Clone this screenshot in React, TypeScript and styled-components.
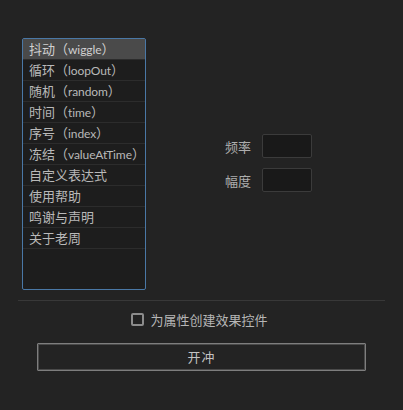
import { useState } from 'react';
import styled, { createGlobalStyle } from 'styled-components';

const GlobalStyle = createGlobalStyle`
  html, body {
    margin: 0;
    padding: 0;
    background: #232323;
  }
  body {
    font-family: "Noto Sans CJK SC", "Noto Sans", sans-serif;
    font-size: 13px;
    color: #b4b4b4;
  }
`;

const Page = styled.div`
  width: 403px;
  height: 410px;
  box-sizing: border-box;
  padding: 38px 18px 0 18px;
`;

const Top = styled.div`
  display: flex;
  height: 252px;
  padding-left: 4px;
`;

const List = styled.ul`
  width: 124px;
  height: 252px;
  box-sizing: border-box;
  margin: 0;
  padding: 0;
  list-style: none;
  background: #1d1d1d;
  border: 1px solid #4a78a6;
  border-radius: 2px;
`;

const Item = styled.li<{ $active?: boolean }>`
  height: 20px;
  line-height: 20px;
  padding-left: 6px;
  border-bottom: 1px solid #2c2c2c;
  white-space: nowrap;
  overflow: hidden;
  background: ${(p) => (p.$active ? '#4a4a4a' : 'transparent')};
  color: ${(p) => (p.$active ? '#d0d0d0' : '#b9b9b9')};
  cursor: default;
`;

const Latin = styled.span`
  font-family: "Lato", "Noto Sans", sans-serif;
  font-size: 12px;
  letter-spacing: -0.1px;
`;

const Params = styled.div`
  flex: 1;
  display: flex;
  flex-direction: column;
  justify-content: center;
  align-items: center;
  gap: 10px;
  padding-left: 6px;
  padding-bottom: 2px;
`;

const Field = styled.label`
  display: flex;
  align-items: center;
  gap: 11px;
  color: #adadad;
`;

const NumberInput = styled.input`
  width: 50px;
  height: 24px;
  box-sizing: border-box;
  background: #191919;
  border: 1px solid #3b3b3b;
  border-radius: 2px;
  color: #cfcfcf;
  font: inherit;
  padding: 0 4px;
  outline: none;
`;

const Divider = styled.hr`
  margin: 10px 0 0 0;
  border: none;
  height: 1px;
  background: #383838;
`;

const CheckRow = styled.label`
  display: flex;
  justify-content: center;
  align-items: center;
  gap: 6px;
  height: 13px;
  margin-top: 12px;
  padding-right: 4px;
  color: #b6b6b6;
  cursor: default;
`;

const Box = styled.span<{ $checked: boolean }>`
  width: 13px;
  height: 13px;
  box-sizing: border-box;
  border: 2px solid #8c8c8c;
  border-radius: 2px;
  background: ${(p) => (p.$checked ? '#8c8c8c' : '#222')};
`;

const GoButton = styled.button`
  display: block;
  width: 329px;
  height: 28px;
  margin: 17px auto 0 auto;
  box-sizing: border-box;
  background: #232323;
  border: 1px solid #7e7e7e;
  box-shadow: inset 0 0 0 1px #4a4a4a;
  border-radius: 1px;
  color: #c2c2c2;
  font: inherit;
  line-height: 24px;
  letter-spacing: 1px;
  padding: 0;
`;

type Entry = { cn: string; en?: string };

const items: Entry[] = [
  { cn: '抖动', en: 'wiggle' },
  { cn: '循环', en: 'loopOut' },
  { cn: '随机', en: 'random' },
  { cn: '时间', en: 'time' },
  { cn: '序号', en: 'index' },
  { cn: '冻结', en: 'valueAtTime' },
  { cn: '自定义表达式' },
  { cn: '使用帮助' },
  { cn: '鸣谢与声明' },
  { cn: '关于老周' },
];

export default function App() {
  const [active, setActive] = useState(0);
  const [checked, setChecked] = useState(false);

  return (
    <>
      <GlobalStyle />
      <Page>
        <Top>
          <List>
            {items.map((t, i) => (
              <Item key={t.cn} $active={i === active} onClick={() => setActive(i)}>
                {t.cn}
                {t.en && (
                  <>
                    （<Latin>{t.en}</Latin>）
                  </>
                )}
              </Item>
            ))}
          </List>
          <Params>
            <Field>
              频率
              <NumberInput />
            </Field>
            <Field>
              幅度
              <NumberInput />
            </Field>
          </Params>
        </Top>
        <Divider />
        <CheckRow onClick={() => setChecked(!checked)}>
          <Box $checked={checked} />
          为属性创建效果控件
        </CheckRow>
        <GoButton>开冲</GoButton>
      </Page>
    </>
  );
}
